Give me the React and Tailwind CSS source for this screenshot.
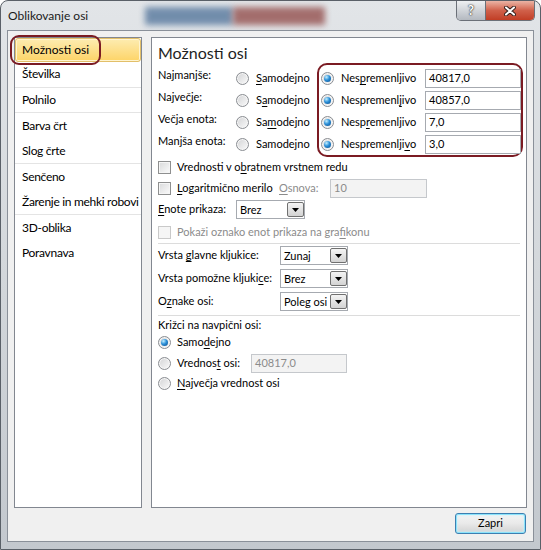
import React from 'react';

// Win7-style dialog: "Oblikovanje osi"

function Radio({ checked }) {
  return (
    <span className="flex h-[13px] w-[13px] shrink-0 items-center justify-center rounded-full border border-[#8a8d92] bg-linear-to-br from-[#d2d3d5] to-[#fbfbfb] shadow-[inset_0_0_0_1px_#f6f6f6]">
      {checked && (
        <span className="h-[7px] w-[7px] rounded-full bg-[radial-gradient(circle_at_35%_30%,#c4f0ff,#2b8fd8_45%,#0b4a88)]" />
      )}
    </span>
  );
}

function Check({ disabled }) {
  return disabled ? (
    <span className="h-[13px] w-[13px] shrink-0 border border-[#c9c9c9] bg-[#f5f5f5]" />
  ) : (
    <span className="h-[13px] w-[13px] shrink-0 border border-[#8e8f8f] bg-linear-to-br from-[#d9dadb] to-[#fbfbfb] shadow-[inset_0_0_0_1px_#f5f5f5]" />
  );
}

function Field({ value, className, disabled }) {
  return (
    <div
      className={
        'flex h-[19px] items-center border pl-[3px] ' +
        (disabled ? 'border-[#c5c8cc] bg-[#f3f3f3] text-[#8b8b8b] ' : 'border-[#a6aab0] bg-white ') +
        className
      }
    >
      {value}
    </div>
  );
}

function Combo({ value, className }) {
  return (
    <div className={'flex h-[19px] items-stretch border border-[#a6aab0] bg-white ' + className}>
      <span className="flex-1 pl-[3px] leading-[17px]">{value}</span>
      <span className="my-px flex w-[17px] items-center justify-center rounded-[2px] border border-[#707070] bg-linear-to-b from-[#f4f4f4] to-[#d3d3d3]">
        <svg width="7" height="4" viewBox="0 0 7 4">
          <path d="M0 0h7L3.5 4z" fill="#000" />
        </svg>
      </span>
    </div>
  );
}

const U = ({ children }) => <u className="underline-offset-2">{children}</u>;

const navItems = [
  { label: 'Številka', sep: true },
  { label: 'Polnilo', sep: true },
  { label: 'Barva črt' },
  { label: 'Slog črte', sep: true },
  { label: 'Senčeno' },
  { label: 'Žarenje in mehki robovi', sep: true },
  { label: '3D-oblika' },
  { label: 'Poravnava' },
];

const limits = [
  { label: 'Najmanjše:', auto: <><U>S</U>amodejno</>, fixed: <>Nes<U>p</U>remenljivo</>, value: '40817,0' },
  { label: 'Največje:', auto: <>S<U>a</U>modejno</>, fixed: <>Nespremenl<U>j</U>ivo</>, value: '40857,0' },
  { label: 'Večja enota:', auto: <>Sa<U>m</U>odejno</>, fixed: <>Nesp<U>r</U>emenljivo</>, value: '7,0' },
  { label: 'Manjša enota:', auto: <>Samodejno</>, fixed: <>Nespremenlji<U>v</U>o</>, value: '3,0' },
];

export default function App() {
  return (
    <div className="h-[550px] w-[541px] overflow-hidden whitespace-nowrap font-['Lato',sans-serif] text-[11px] text-black">
      <div className="flex h-full flex-col rounded-t-[8px] border border-[#5a6068] bg-linear-to-b from-[#e2e5e8] via-[#d3d7db] to-[#c3c8ce]">
        {/* title bar */}
        <div className="flex h-[29px] shrink-0 items-center">
          <span className="w-[144px] pl-[7px] text-[12px] text-[#1b1b1b]">Oblikovanje osi</span>
          <div className="h-[18px] w-[88px] bg-[#56789d] opacity-80 blur-[3px]" />
          <div className="h-[18px] w-[92px] bg-[#94504e] opacity-80 blur-[3px]" />
          <div className="flex-1" />
          <div className="mr-[5px] flex self-start overflow-hidden rounded-b-[5px] border border-t-0 border-[#6b7078]">
            <div className="flex h-[19px] w-[29px] items-center justify-center border-r border-[#6b7078] bg-linear-to-b from-[#eef0f2] to-[#b4b9c0] text-[13px] font-bold text-white [text-shadow:0_0_2px_#222,0_0_1px_#222]">
              ?
            </div>
            <div className="flex h-[19px] w-[48px] items-center justify-center bg-linear-to-b from-[#eab3a5] via-[#d0604a] to-[#c13d24]">
              <svg width="12" height="10" viewBox="0 0 12 10">
                <path d="M2 1.5l8 7M10 1.5l-8 7" stroke="#3a2420" strokeWidth="4" strokeLinecap="round" />
                <path d="M2 1.5l8 7M10 1.5l-8 7" stroke="#fff" strokeWidth="2" strokeLinecap="round" />
              </svg>
            </div>
          </div>
        </div>

        {/* client area */}
        <div className="relative mx-[6px] mb-[7px] flex flex-1 flex-col border border-[#8a9099] bg-[#f0f0f0] pt-[6px] pr-[5px] pb-[7px] pl-[6px]">
          <div className="flex h-[471px] gap-[9px]">
            {/* left nav */}
            <div className="w-[128px] border border-[#828790] bg-white text-[12px]">
              <div className="flex h-[24px] items-center rounded-[3px] border border-[#e2bf69] bg-linear-to-b from-[#fdecb0] via-[#fde08c] to-[#fdd466] pl-[6px] shadow-[inset_0_0_0_1px_#fff4cf]">
                Možnosti osi
              </div>
              {navItems.map((it) => (
                <div
                  key={it.label}
                  className={
                    'flex h-[25.5px] items-center pl-[7px] tracking-[-0.3px] ' +
                    (it.sep ? 'border-b border-[#e4e4e4]' : '')
                  }
                >
                  {it.label}
                </div>
              ))}
            </div>

            {/* right pane */}
            <div className="flex w-[376px] flex-col border border-[#828790] bg-white pt-[5px] pl-[6px]">
              <div className="h-[20px] text-[16px] leading-[20px] text-[#1e1e1e]">Možnosti osi</div>

              <div className="flex">
                <div className="flex flex-col pt-[4px]">
                  {limits.map((r) => (
                    <div key={r.label} className="flex h-[22px] items-center">
                      <span className="w-[78px] pb-[5px]">{r.label}</span>
                      <Radio />
                      <span className="ml-[7px] w-[61px]">{r.auto}</span>
                    </div>
                  ))}
                </div>
                <div className="w-[206px] rounded-[10px] border-2 border-[#7b1b23] pt-[2px] pl-[2px]">
                  {limits.map((r) => (
                    <div key={r.value} className="flex h-[22px] items-center">
                      <Radio checked />
                      <span className="ml-[7px] w-[84px]">{r.fixed}</span>
                      <Field value={r.value} className="w-[96px]" />
                    </div>
                  ))}
                </div>
              </div>

              <div className="flex h-[21px] items-center gap-[6px]">
                <Check />
                <span>Vrednosti v o<U>b</U>ratnem vrstnem redu</span>
              </div>
              <div className="flex h-[20px] items-center">
                <Check />
                <span className="ml-[6px] w-[102px]"><U>L</U>ogaritmično merilo</span>
                <span className="w-[51px] text-[#8b8b8b]"><U>O</U>snova:</span>
                <Field value="10" disabled className="w-[97px]" />
              </div>
              <div className="flex h-[23px] items-center">
                <span className="w-[78px]"><U>E</U>note prikaza:</span>
                <Combo value="Brez" className="w-[69px]" />
              </div>
              <div className="flex h-[22px] items-center gap-[6px] text-[#8b8b8b]">
                <Check disabled />
                <span>Pokaži oznako enot prikaza na gra<U>f</U>ikonu</span>
              </div>
              <div className="mr-[6px] h-px bg-[#dcdcdc]" />

              <div className="flex h-[23px] items-center">
                <span className="w-[122px]">Vrsta <U>g</U>lavne kljukice:</span>
                <Combo value="Zunaj" className="w-[68px]" />
              </div>
              <div className="flex h-[23px] items-center">
                <span className="w-[122px]">Vrsta pomožne kljuki<U>c</U>e:</span>
                <Combo value="Brez" className="w-[68px]" />
              </div>
              <div className="flex h-[23px] items-center">
                <span className="w-[122px]">O<U>z</U>nake osi:</span>
                <Combo value="Poleg osi" className="w-[68px]" />
              </div>
              <div className="mt-[2px] mr-[6px] h-px bg-[#dcdcdc]" />

              <div className="flex h-[19px] items-center">Križci na navpični osi:</div>
              <div className="flex h-[15px] items-center gap-[6px]">
                <Radio checked />
                <span>Samo<U>d</U>ejno</span>
              </div>
              <div className="flex h-[26px] items-center">
                <Radio />
                <span className="ml-[6px] w-[74px]">Vrednos<U>t</U> osi:</span>
                <Field value="40817,0" disabled className="w-[96px]" />
              </div>
              <div className="flex h-[15px] items-center gap-[6px]">
                <Radio />
                <span><U>N</U>ajvečja vrednost osi</span>
              </div>
            </div>
          </div>

          <div className="mt-[5px] flex justify-end pr-[2px]">
            <button className="flex h-[21px] w-[71px] items-center justify-center rounded-[3px] border border-[#3c7fb1] bg-linear-to-b from-[#f5f5f5] via-[#e9e9e9] to-[#d2d2d2] shadow-[inset_0_0_0_1px_#8be3fb,inset_0_0_3px_1px_#c9f1fd]">
              Zapri
            </button>
          </div>

          {/* annotation over the selected nav item */}
          <div className="pointer-events-none absolute top-[4px] left-[2px] h-[30px] w-[91px] rounded-[9px] border-2 border-[#7b1b23]" />
        </div>
      </div>
    </div>
  );
}
